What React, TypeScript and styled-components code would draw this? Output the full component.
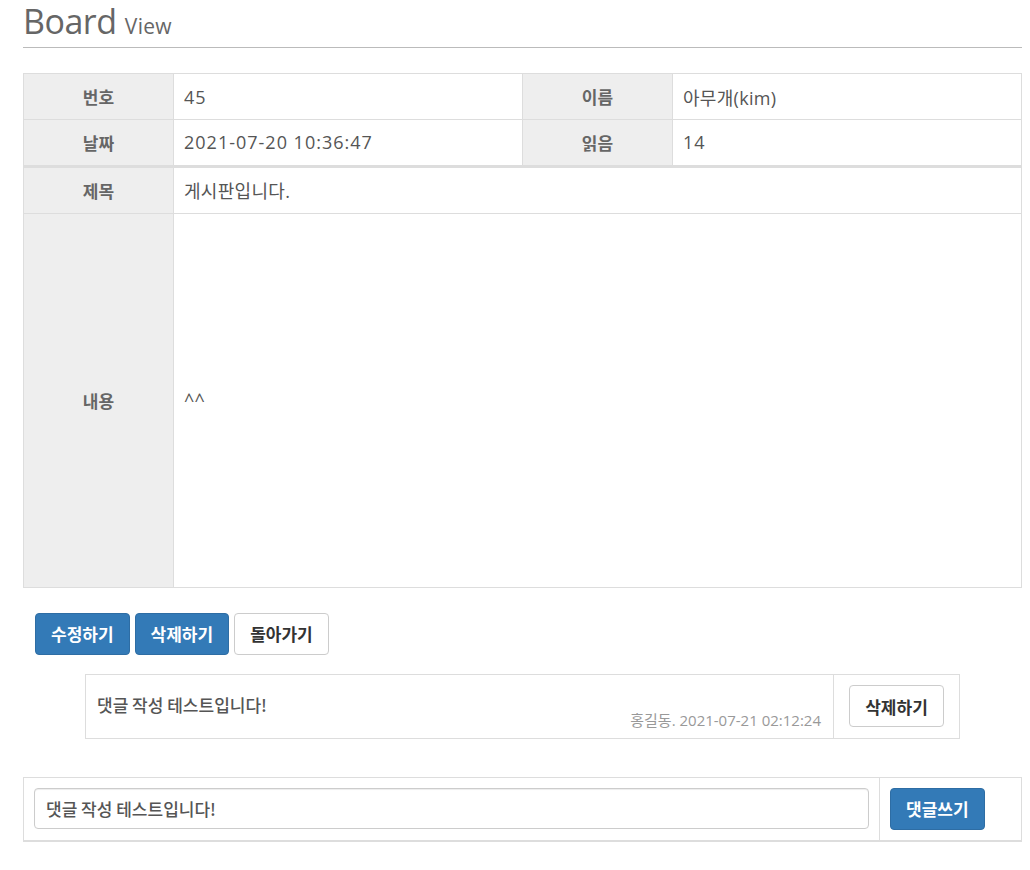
import styled, { createGlobalStyle } from "styled-components";

const GlobalStyle = createGlobalStyle`
  body {
    margin: 0;
    background: #fff;
    font-family: "Noto Sans CJK KR", "Open Sans", sans-serif;
    color: #555;
  }
  * { box-sizing: border-box; }
`;

export default function App() {
  return (
    <>
      <GlobalStyle />
      <Page>
        <Title>
          Board <small>View</small>
        </Title>

        <InfoTable $bottom={2}>
          <colgroup>
            <col style={{ width: 150 }} />
            <col style={{ width: 349 }} />
            <col style={{ width: 150 }} />
            <col />
          </colgroup>
          <tbody>
            <tr>
              <Label>번호</Label>
              <Value $spaced>45</Value>
              <Label>이름</Label>
              <Value>아무개(kim)</Value>
            </tr>
            <tr>
              <Label>날짜</Label>
              <Value $spaced>2021-07-20 10:36:47</Value>
              <Label>읽음</Label>
              <Value $spaced>14</Value>
            </tr>
          </tbody>
        </InfoTable>

        <InfoTable $bottom={1}>
          <colgroup>
            <col style={{ width: 150 }} />
            <col />
          </colgroup>
          <tbody>
            <tr>
              <Label>제목</Label>
              <Value>게시판입니다.</Value>
            </tr>
            <tr>
              <Label $tall>내용</Label>
              <Value>^^</Value>
            </tr>
          </tbody>
        </InfoTable>

        <ButtonRow>
          <Button $primary>수정하기</Button>
          <Button $primary>삭제하기</Button>
          <Button>돌아가기</Button>
        </ButtonRow>

        <CommentBox>
          <CommentBody>
            <CommentText>댓글 작성 테스트입니다!</CommentText>
            <CommentMeta>홍길동. 2021-07-21 02:12:24</CommentMeta>
          </CommentBody>
          <CommentSide>
            <Button>삭제하기</Button>
          </CommentSide>
        </CommentBox>

        <WriteBox>
          <WriteMain>
            <CommentInput defaultValue="댓글 작성 테스트입니다!" />
          </WriteMain>
          <WriteSide>
            <Button $primary>댓글쓰기</Button>
          </WriteSide>
        </WriteBox>
      </Page>
    </>
  );
}

const Page = styled.div`
  width: 1022px;
  padding: 0 0 0 23px;
`;

const Title = styled.h1`
  height: 48px;
  margin: 0 0 25px;
  padding: 2px 0 0;
  font-family: "Open Sans", "Noto Sans CJK KR", sans-serif;
  font-size: 34px;
  font-weight: 400;
  line-height: 38px;
  color: #666;
  border-bottom: 1px solid #bbb;
  letter-spacing: -0.5px;

  small {
    font-size: 21px;
    line-height: 20px;
    color: #666;
    letter-spacing: 0.3px;
  }
`;

const InfoTable = styled.table<{ $bottom: number }>`
  width: 999px;
  border-collapse: collapse;
  table-layout: fixed;
  border: 1px solid #ddd;
  border-bottom: ${(p) => p.$bottom}px solid #ddd;

  td {
    border: 1px solid #ddd;
  }
`;

const Label = styled.td<{ $tall?: boolean }>`
  height: ${(p) => (p.$tall ? 374 : 46)}px;
  background: #eee;
  text-align: center;
  font-size: 17px;
  font-weight: 700;
  color: #666;
  padding: 0;
`;

const Value = styled.td<{ $spaced?: boolean }>`
  padding: 0 10px;
  font-family: "Open Sans", "Noto Sans CJK KR", sans-serif;
  font-size: 18px;
  letter-spacing: ${(p) => (p.$spaced ? "1px" : "0.3px")};
  color: #555;
`;

const ButtonRow = styled.div`
  display: flex;
  gap: 5px;
  margin: 25px 0 19px 12px;
`;

const Button = styled.button<{ $primary?: boolean }>`
  height: 42px;
  padding: 0 15px;
  border-radius: 4px;
  border: 1px solid ${(p) => (p.$primary ? "#2e6da4" : "#ccc")};
  background: ${(p) => (p.$primary ? "#337ab7" : "#fff")};
  color: ${(p) => (p.$primary ? "#fff" : "#333")};
  font-family: "Noto Sans CJK KR", sans-serif;
  font-size: 17px;
  font-weight: 700;
  cursor: pointer;
`;

const CommentBox = styled.div`
  display: flex;
  width: 875px;
  height: 65px;
  margin-left: 62px;
  border: 1px solid #ddd;
`;

const CommentBody = styled.div`
  flex: 1;
  display: flex;
  flex-direction: column;
  padding: 20px 12px 0 11px;
`;

const CommentText = styled.div`
  font-size: 17px;
  font-weight: 500;
  color: #555;
  line-height: 20px;
`;

const CommentMeta = styled.div`
  margin-top: -3px;
  text-align: right;
  font-family: "Open Sans", "Noto Sans CJK KR", sans-serif;
  font-size: 15px;
  color: #999;
  line-height: 16px;
`;

const CommentSide = styled.div`
  width: 126px;
  display: flex;
  align-items: center;
  justify-content: center;
  border-left: 1px solid #ddd;
`;

const WriteBox = styled.div`
  display: flex;
  width: 999px;
  height: 65px;
  margin-top: 38px;
  border: 1px solid #ddd;
  border-bottom-width: 2px;
`;

const WriteMain = styled.div`
  flex: 1;
  display: flex;
  align-items: center;
  padding: 0 10px;
`;

const CommentInput = styled.input`
  width: 100%;
  height: 41px;
  padding: 0 11px;
  border: 1px solid #ccc;
  border-radius: 4px;
  box-shadow: inset 0 1px 1px rgba(0, 0, 0, 0.075);
  font-family: "Noto Sans CJK KR", sans-serif;
  font-size: 17px;
  font-weight: 500;
  color: #555;
`;

const WriteSide = styled.div`
  width: 142px;
  display: flex;
  align-items: center;
  padding-left: 10px;
  border-left: 1px solid #ddd;
`;
